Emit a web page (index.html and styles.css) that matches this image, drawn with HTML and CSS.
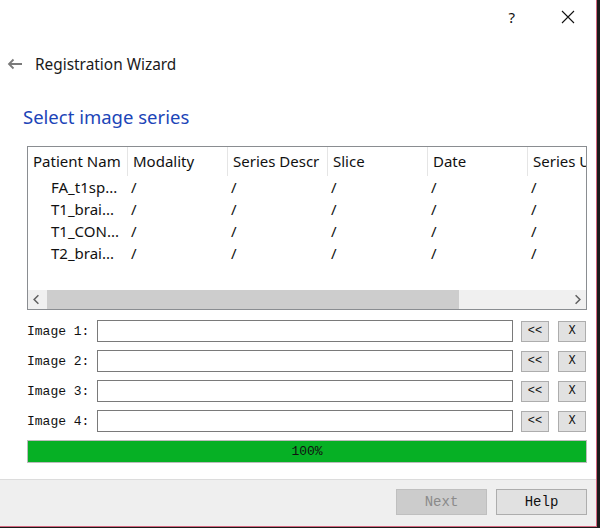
FILE: index.html
```html
<!DOCTYPE html>
<html>
<head>
<meta charset="utf-8">
<link rel="stylesheet" href="styles.css">
</head>
<body>
<div class="window">
  <div class="titlebar">
    <span class="help-q">?</span>
    <svg class="close" width="14" height="14" viewBox="0 0 14 14"><path d="M1 1L13 13M13 1L1 13" stroke="#111" stroke-width="1.1" fill="none"/></svg>
  </div>
  <div class="navrow">
    <svg class="back" width="16" height="12" viewBox="0 0 16 12"><path d="M15 6H2M6.5 1.5L2 6L6.5 10.5" stroke="#7a7a7a" stroke-width="1.8" fill="none"/></svg>
    <span class="navtitle">Registration Wizard</span>
  </div>
  <h1 class="pagetitle">Select image series</h1>
  <div class="content">
    <div class="table">
      <div class="thead">
        <div class="th">Patient Nam</div>
        <div class="th">Modality</div>
        <div class="th">Series Descr</div>
        <div class="th">Slice</div>
        <div class="th">Date</div>
        <div class="th last">Series U</div>
      </div>
      <div class="tbody">
        <div class="tr"><div class="td name">FA_t1sp...</div><div class="td">/</div><div class="td">/</div><div class="td">/</div><div class="td">/</div><div class="td">/</div></div>
        <div class="tr"><div class="td name">T1_brai...</div><div class="td">/</div><div class="td">/</div><div class="td">/</div><div class="td">/</div><div class="td">/</div></div>
        <div class="tr"><div class="td name">T1_CON...</div><div class="td">/</div><div class="td">/</div><div class="td">/</div><div class="td">/</div><div class="td">/</div></div>
        <div class="tr"><div class="td name">T2_brai...</div><div class="td">/</div><div class="td">/</div><div class="td">/</div><div class="td">/</div><div class="td">/</div></div>
      </div>
      <div class="hscroll">
        <svg class="arrow" width="16" height="20" viewBox="0 0 16 20"><path d="M10 5.5L5.5 10L10 14.5" stroke="#606060" stroke-width="1.6" fill="none"/></svg>
        <div class="track"><div class="thumb"></div></div>
        <svg class="arrow" width="16" height="20" viewBox="0 0 16 20"><path d="M6 5.5L10.5 10L6 14.5" stroke="#606060" stroke-width="1.6" fill="none"/></svg>
      </div>
    </div>
    <div class="imgrows">
      <div class="imgrow"><span class="lbl">Image 1:</span><div class="field"></div><button class="sbtn">&lt;&lt;</button><button class="sbtn">X</button></div>
      <div class="imgrow"><span class="lbl">Image 2:</span><div class="field"></div><button class="sbtn">&lt;&lt;</button><button class="sbtn">X</button></div>
      <div class="imgrow"><span class="lbl">Image 3:</span><div class="field"></div><button class="sbtn">&lt;&lt;</button><button class="sbtn">X</button></div>
      <div class="imgrow"><span class="lbl">Image 4:</span><div class="field"></div><button class="sbtn">&lt;&lt;</button><button class="sbtn">X</button></div>
    </div>
    <div class="progress">100%</div>
  </div>
  <div class="footer">
    <button class="fbtn disabled">Next</button>
    <button class="fbtn">Help</button>
  </div>
</div>
</body>
</html>
```

FILE: styles.css
```css
html, body {
  margin: 0;
  padding: 0;
  background: #1b1b1b;
}
body {
  width: 600px;
  height: 528px;
  overflow: hidden;
  font-family: "Noto Sans", "Open Sans", sans-serif;
}
.window {
  width: 596px;
  height: 526px;
  background: #fff;
  border-right: 1px solid #d4677f;
  border-bottom: 1px solid #d4677f;
  display: flex;
  flex-direction: column;
}
.titlebar {
  height: 33px;
  flex: none;
  display: flex;
  align-items: center;
  justify-content: flex-end;
}
.help-q {
  font-size: 15px;
  color: #111;
  margin-right: 46px;
}
.close {
  margin-right: 21px;
}
.navrow {
  height: 30px;
  flex: none;
  display: flex;
  align-items: center;
  padding-left: 7px;
  margin-top: 16px;
}
.back {
  margin-right: 12px;
}
.navtitle {
  font-size: 15.4px;
  color: #1a1a1a;
}
.pagetitle {
  margin: 23px 0 0 23px;
  height: 30px;
  flex: none;
  font-size: 18.5px;
  font-weight: normal;
  color: #1c45b8;
  line-height: 30px;
}
.content {
  padding: 0 9px 0 27px;
  margin-top: 14px;
}
.table {
  width: 558px;
  height: 162px;
  border: 1px solid #8a8d91;
  display: flex;
  flex-direction: column;
  overflow: hidden;
}
.thead {
  display: flex;
  height: 29px;
  flex: none;
}
.th {
  width: 100px;
  flex: none;
  border-right: 1px solid #e5e5e5;
  font-size: 15px;
  line-height: 29px;
  padding-left: 5px;
  box-sizing: border-box;
  white-space: nowrap;
  overflow: hidden;
  color: #111;
}
.th.last {
  width: 58px;
  border-right: none;
}
.tbody {
  flex: 1;
}
.tr {
  display: flex;
  height: 22px;
}
.td {
  width: 100px;
  flex: none;
  font-size: 15px;
  line-height: 22px;
  padding-left: 3px;
  box-sizing: border-box;
  color: #111;
  white-space: nowrap;
}
.td:last-child {
  width: 58px;
}
.td.name {
  padding-left: 23px;
}
.hscroll {
  height: 19px;
  flex: none;
  display: flex;
  background: #f0f0f0;
  align-items: stretch;
}
.arrow {
  flex: none;
  width: 17px;
  height: 19px;
}
.track {
  flex: 1;
  display: flex;
  align-items: stretch;
}
.thumb {
  width: 412px;
  margin-left: 2px;
  background: #cdcdcd;
}
.imgrows {
  margin-top: 10px;
  display: flex;
  flex-direction: column;
  gap: 8px;
}
.imgrow {
  display: flex;
  align-items: center;
  height: 22px;
}
.lbl {
  width: 70px;
  flex: none;
  font-family: "Liberation Mono", "DejaVu Sans Mono", monospace;
  font-size: 13px;
  color: #111;
}
.field {
  width: 414px;
  height: 20px;
  border: 1px solid #7a7a7a;
  background: #fff;
  flex: none;
}
.sbtn {
  width: 28px;
  height: 21px;
  margin-left: 8px;
  padding: 0;
  background: #e1e1e1;
  border: 1px solid #adadad;
  font-family: "Liberation Mono", "DejaVu Sans Mono", monospace;
  font-size: 12px;
  color: #111;
  flex: none;
}
.sbtn + .sbtn {
  margin-left: 9px;
}
.progress {
  margin-top: 8px;
  width: 558px;
  height: 21px;
  border: 1px solid #bcbcbc;
  background: #06b025;
  font-family: "Liberation Mono", "DejaVu Sans Mono", monospace;
  font-size: 13px;
  line-height: 21px;
  text-align: center;
  color: #111;
}
.footer {
  margin-top: auto;
  flex: none;
  height: 47px;
  background: #efefef;
  border-top: 1px solid #dcdcdc;
  display: flex;
  align-items: flex-start;
  justify-content: flex-end;
  padding: 9px 9px 0 0;
  gap: 9px;
  box-sizing: border-box;
}
.fbtn {
  width: 91px;
  height: 26px;
  padding: 0;
  background: #e1e1e1;
  border: 1px solid #adadad;
  font-family: "Liberation Mono", "DejaVu Sans Mono", monospace;
  font-size: 14px;
  color: #111;
}
.fbtn.disabled {
  background: #cccccc;
  border-color: #bfbfbf;
  color: #8a8a8a;
}
```
